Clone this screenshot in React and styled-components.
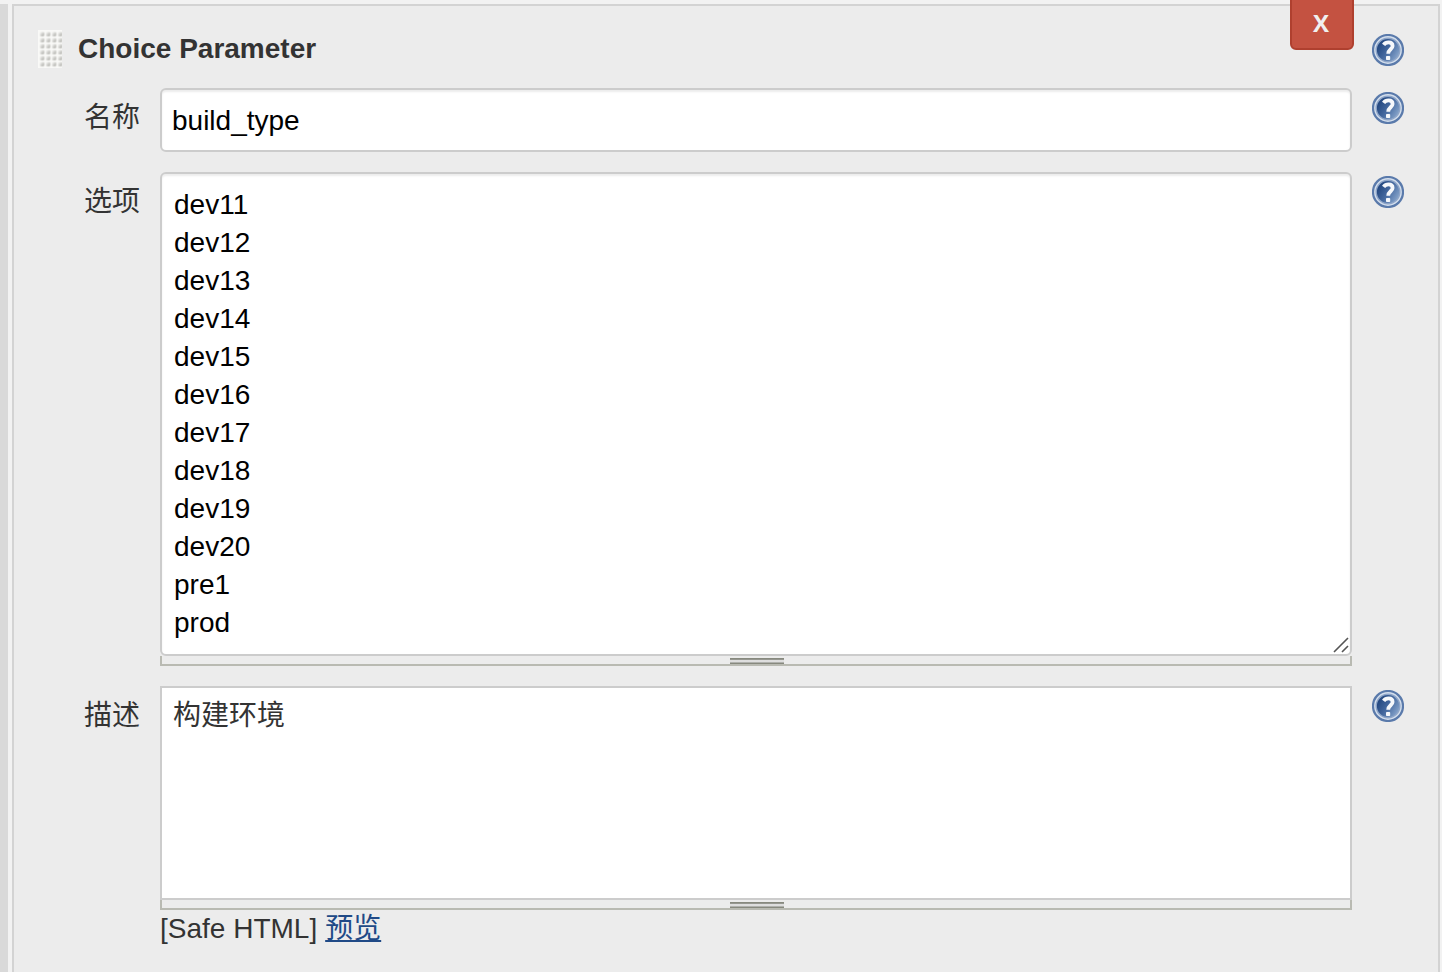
import React from "react";
import styled, { createGlobalStyle } from "styled-components";

const GlobalStyle = createGlobalStyle`
  * { box-sizing: border-box; }
  body {
    margin: 0;
    background: #f2f2f2;
    color: #333;
    font: 28px/38px "Liberation Sans", "Noto Sans CJK SC", sans-serif;
  }
`;

const Page = styled.div`
  display: flex;
  gap: 4px;
  height: 972px;
  padding: 4px 2px 0 0;
  overflow: hidden;
`;

const SideStrip = styled.div`
  flex: none;
  width: 8px;
  background: #d9d9d9;
`;

const Panel = styled.section`
  position: relative;
  flex: 1;
  padding: 24px 34px 0 24px;
  background: #ececec;
  border: 2px solid #d3d3d3;
  border-bottom: 0;
`;

const Header = styled.header`
  display: flex;
  align-items: flex-start;
  height: 58px;
`;

const DragHandle = styled.svg`
  display: block;
  width: 24px;
  height: 38px;
  margin-right: 16px;
`;

const Title = styled.h2`
  flex: 1;
  margin: 0;
  font-size: 28px;
  line-height: 38px;
  font-weight: 700;
`;

const DeleteButton = styled.button`
  position: absolute;
  top: -8px;
  right: 84px;
  width: 64px;
  height: 52px;
  padding: 0 2px 2px 0;
  color: #f0f0f0;
  background: #c45241;
  border: 2px solid #af402f;
  border-radius: 0 0 6px 6px;
  font: 700 24px/46px "Open Sans", sans-serif;
`;

const HelpButton = styled.button`
  flex: none;
  width: 32px;
  height: 32px;
  margin-top: 4px;
  padding: 0;
  border: 0;
  background: none;
  svg { display: block; }
`;

const Row = styled.div`
  display: grid;
  grid-template-columns: 102px 1192px 32px;
  column-gap: 20px;
  align-items: start;
  margin-bottom: 20px;
`;

const Label = styled.label`
  padding-top: 11px;
  text-align: right;
`;

const TextInput = styled.input`
  display: block;
  width: 100%;
  height: 64px;
  padding: 2px 10px 0;
  border: 2px solid #ccc;
  border-radius: 6px;
  box-shadow: inset 0 2px 2px rgba(0, 0, 0, 0.075);
  background: #fff;
  color: #000;
  font: inherit;
  outline: none;
`;

const TextAreaFrame = styled.div`
  position: relative;
`;

const TextArea = styled.textarea`
  display: block;
  width: 100%;
  height: ${(p) => p.$height}px;
  padding: ${(p) => (p.$plain ? "9px 11px 0" : "12px 12px 0")};
  border: 2px solid #ccc;
  border-radius: ${(p) => (p.$plain ? "0" : "6px")};
  box-shadow: ${(p) => (p.$plain ? "none" : "inset 0 2px 2px rgba(0, 0, 0, 0.075)")};
  background: #fff;
  color: ${(p) => (p.$plain ? "#333" : "#000")};
  font: inherit;
  resize: none;
  overflow: hidden;
  outline: none;
`;

const CornerGrip = styled.svg`
  position: absolute;
  right: 2px;
  bottom: 12px;
`;

const ResizeBar = styled.div`
  display: flex;
  justify-content: center;
  height: 10px;
  border: 2px solid #b9bab2;
  border-top: 0;
`;

const ResizeGrip = styled.div`
  width: 54px;
  height: 6px;
  margin: 2px 0 0 2px;
  background: linear-gradient(
    #87897e 0 1px, #969790 1px 2px, #dedede 2px 4px,
    #b0b1ad 4px 5px, #87897e 5px 6px
  );
`;

const Footnote = styled.div`
  display: flex;
  gap: 8px;
`;

const PreviewLink = styled.a`
  color: #204a87;
  text-decoration: underline;
  text-decoration-thickness: 2px;
  text-underline-offset: 2px;
`;

function Help() {
  return (
    <HelpButton aria-label="Help">
      <svg width="32" height="32" viewBox="0 0 32 32">
        <defs>
          <linearGradient id="helpFill" x1="0" y1="0.2" x2="1" y2="0.8">
            <stop offset="0.1" stopColor="#23477f" />
            <stop offset="0.5" stopColor="#45699f" />
            <stop offset="1" stopColor="#8eabd0" />
          </linearGradient>
        </defs>
        <circle cx="16" cy="16" r="15" fill="#d3deec" stroke="#5a7aab" strokeWidth="2.2" />
        <circle cx="16" cy="16" r="11.8" fill="url(#helpFill)" stroke="#8ea5c8" strokeWidth="1.4" />
        <path
          d="M11.6 10.8C12.8 9.1 14.6 8.4 16.6 8.4C19.2 8.4 20.6 9.8 20.6 12C20.6 15.2 16.2 15.5 16.2 19.8"
          fill="none" stroke="#f6f8fb" strokeWidth="3.8"
        />
        <rect x="14" y="22" width="4.2" height="4" rx="0.8" fill="#f6f8fb" />
      </svg>
    </HelpButton>
  );
}

function Handle() {
  return (
    <DragHandle viewBox="0 0 24 38">
      <defs>
        <linearGradient id="dotFill" x1="0" y1="0" x2="1" y2="1">
          <stop offset="0.15" stopColor="#eeeeec" />
          <stop offset="0.9" stopColor="#b0b0ab" />
        </linearGradient>
        <pattern id="dots" width="6" height="6" patternUnits="userSpaceOnUse" x="1.5" y="1.5">
          <rect x="0.5" y="0.5" width="4.2" height="4.2" rx="1" fill="url(#dotFill)" />
        </pattern>
      </defs>
      <rect width="24" height="38" fill="#f9f9f7" />
      <rect x="1" y="1" width="23" height="36.5" fill="url(#dots)" />
    </DragHandle>
  );
}

const CHOICES = [
  "dev11", "dev12", "dev13", "dev14", "dev15", "dev16",
  "dev17", "dev18", "dev19", "dev20", "pre1", "prod",
].join("\n");

export default function App() {
  return (
    <>
      <GlobalStyle />
      <Page>
        <SideStrip />
        <Panel>
          <Header>
            <Handle />
            <Title>Choice Parameter</Title>
            <DeleteButton>X</DeleteButton>
            <Help />
          </Header>
          <Row>
            <Label htmlFor="name">名称</Label>
            <TextInput id="name" defaultValue="build_type" />
            <Help />
          </Row>
          <Row>
            <Label htmlFor="choices">选项</Label>
            <TextAreaFrame>
              <TextArea id="choices" $height={484} defaultValue={CHOICES} spellCheck={false} />
              <CornerGrip width="18" height="18" viewBox="0 0 18 18">
                <path d="M2 16L16 2M10 16L16 10" stroke="#fff" strokeWidth="4" />
                <path d="M2 16L16 2M10 16L16 10" stroke="#555" strokeWidth="1.6" />
              </CornerGrip>
              <ResizeBar><ResizeGrip /></ResizeBar>
            </TextAreaFrame>
            <Help />
          </Row>
          <Row>
            <Label htmlFor="description">描述</Label>
            <div>
              <TextArea id="description" $plain $height={214} defaultValue="构建环境" spellCheck={false} />
              <ResizeBar><ResizeGrip /></ResizeBar>
              <Footnote>
                <span>[Safe HTML]</span>
                <PreviewLink href="#">预览</PreviewLink>
              </Footnote>
            </div>
            <Help />
          </Row>
        </Panel>
      </Page>
    </>
  );
}
